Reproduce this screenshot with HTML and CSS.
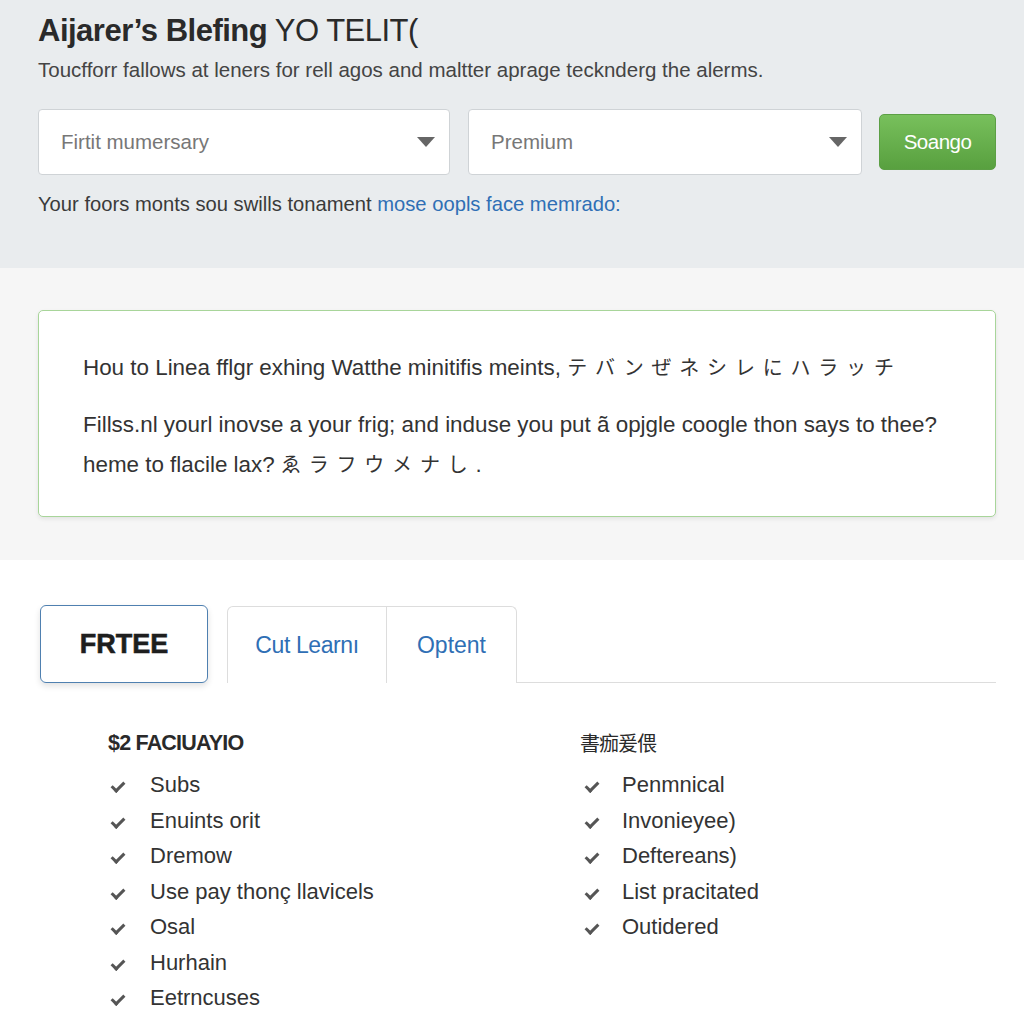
FILE: index.html
```html
<!DOCTYPE html>
<html lang="en">

<head>
    <meta charset="UTF-8">
    <meta name="viewport" content="width=device-width, initial-scale=1.0">
    <title>Aijarer's Blefing</title>
    <link rel="stylesheet" href="styles.css">
</head>

<body>
    <header class="hero">
        <h1><strong>Aijarer’s Blefing</strong> YO TELIT(</h1>
        <p class="lead">Toucfforr fallows at leners for rell agos and maltter aprage tecknderg the alerms.</p>
        <div class="search-row">
            <div class="fake-select select-wide">
                <span>Firtit mumersary</span>
                <svg class="caret" width="18" height="10" viewBox="0 0 18 10"><path d="M0 0h18L9 10z" /></svg>
            </div>
            <div class="fake-select select-narrow">
                <span>Premium</span>
                <svg class="caret" width="18" height="10" viewBox="0 0 18 10"><path d="M0 0h18L9 10z" /></svg>
            </div>
            <button type="button" class="go-btn">Soango</button>
        </div>
        <p class="note">Your foors monts sou swills tonament <a href="#">mose oopls face memrado:</a></p>
    </header>

    <section class="band">
        <div class="card">
            <p class="card-line">Hou to Linea fflgr exhing Watthe minitifis meints, <span class="kana">テバンぜネシレにハラッチ</span></p>
            <p class="card-line card-gap">Fillss.nl yourl inovse a your frig; and induse you put ã opjgle coogle thon says to thee?</p>
            <p class="card-line">heme to flacile lax? <span class="kana">ゑラフウメナし</span>.</p>
        </div>
    </section>

    <section class="plans">
        <div class="tabs">
            <div class="tab tab-active">FRTEE</div>
            <div class="tab-group">
                <div class="tab tab-first">Cut Learnı</div>
                <div class="tab tab-second">Optent</div>
            </div>
            <div class="tab-rest"></div>
        </div>

        <div class="columns">
            <div class="col">
                <h3>$2 FACIUAYIO</h3>
                <ul class="checks">
                    <li>Subs</li>
                    <li>Enuints orit</li>
                    <li>Dremow</li>
                    <li>Use pay thonç llavicels</li>
                    <li>Osal</li>
                    <li>Hurhain</li>
                    <li>Eetrncuses</li>
                </ul>
            </div>
            <div class="col col-right">
                <h3 class="cjk">書痂爰偎</h3>
                <ul class="checks">
                    <li>Penmnical</li>
                    <li>Invonieyee)</li>
                    <li>Deftereans)</li>
                    <li>List pracitated</li>
                    <li>Outidered</li>
                </ul>
            </div>
        </div>
    </section>
</body>

</html>
```

FILE: styles.css
```css
:root {
    --text-color: #333333;
    --muted: #666666;
    --hero-bg: #e9ecee;
    --band-bg: #f6f6f6;
    --border-color: #cfd3d6;
    --green-dark: #58a03f;
    --green-border: #a8d59a;
    --blue: #2f6fb5;
    --tab-border: #dddddd;
}

body {
    font-family: "Liberation Sans", Arial, sans-serif;
    margin: 0;
    padding: 0;
    color: var(--text-color);
    background-color: #ffffff;
}

.hero {
    background-color: var(--hero-bg);
    padding: 12px 28px 0 38px;
    height: 268px;
    box-sizing: border-box;
}

h1 {
    margin: 0;
    font-size: 31px;
    font-weight: normal;
    line-height: 38px;
    letter-spacing: -0.5px;
    color: #2a2a2a;
}

h1 strong {
    font-weight: bold;
}

.lead {
    margin: 8px 0 0;
    font-size: 20.5px;
    line-height: 24px;
    color: #444444;
}

.search-row {
    display: flex;
    align-items: center;
    margin-top: 27px;
}

.fake-select {
    display: flex;
    align-items: center;
    justify-content: space-between;
    height: 66px;
    padding: 0 14px 0 22px;
    background-color: #ffffff;
    border: 1px solid var(--border-color);
    border-radius: 4px;
    box-sizing: border-box;
    font-size: 20.5px;
    color: #777777;
}

.select-wide {
    width: 412px;
    margin-right: 18px;
}

.select-narrow {
    width: 394px;
    margin-right: 17px;
}

.caret {
    fill: #666666;
}

.go-btn {
    width: 117px;
    height: 56px;
    font-family: inherit;
    font-size: 20.5px;
    letter-spacing: -0.5px;
    color: #ffffff;
    background: linear-gradient(#78c05c, var(--green-dark));
    border: 1px solid #5c9f45;
    border-radius: 5px;
    cursor: pointer;
}

.note {
    margin: 17px 0 0;
    font-size: 20.2px;
    line-height: 24px;
    color: #3a3a3a;
}

.note a {
    color: var(--blue);
    text-decoration: none;
}

.band {
    background-color: var(--band-bg);
    padding: 42px 28px 43px 38px;
}

.card {
    background-color: #ffffff;
    border: 1.5px solid var(--green-border);
    border-radius: 5px;
    box-shadow: 0 2px 4px rgba(0, 0, 0, 0.08);
    height: 207px;
    box-sizing: border-box;
    padding: 42px 44px 0;
}

.card-line {
    margin: 0;
    font-size: 22.4px;
    line-height: 28px;
    color: #333333;
}

.card-gap {
    margin-top: 29px;
    margin-bottom: 11px;
}

.kana {
    font-family: "Noto Sans CJK JP", sans-serif;
    font-size: 20px;
    letter-spacing: 7.8px;
}

.plans {
    padding: 43px 28px 0 38px;
}

.tabs {
    display: flex;
    align-items: flex-end;
    height: 80px;
}

.tab {
    display: flex;
    align-items: center;
    justify-content: center;
    height: 78px;
    box-sizing: border-box;
    font-size: 23px;
    color: var(--blue);
}

.tab-active {
    width: 168px;
    margin-left: 2px;
    border: 1.5px solid #4f80b0;
    border-radius: 6px;
    box-shadow: 0 3px 6px rgba(0, 0, 0, 0.12);
    font-size: 27px;
    font-weight: 900;
    color: #1e1e1e;
    -webkit-text-stroke: 0.6px #1e1e1e;
}

.tab-group {
    display: flex;
    margin-left: 19px;
    border: 1.5px solid var(--tab-border);
    border-bottom: none;
    border-radius: 6px 6px 0 0;
    box-sizing: border-box;
}

.tab-first {
    width: 159px;
    border-right: 1.5px solid var(--tab-border);
    height: 76px;
    letter-spacing: -0.4px;
}

.tab-second {
    width: 129px;
    height: 76px;
}

.tab-rest {
    flex: 1;
    border-bottom: 1.5px solid var(--tab-border);
}

.columns {
    display: flex;
    padding-top: 45px;
}

.col {
    flex: 0 0 542px;
    box-sizing: border-box;
    padding-left: 70px;
}

.col-right {
    flex: 1;
    padding-left: 0;
}

h3 {
    margin: 0 0 9px;
    font-size: 21.5px;
    line-height: 30px;
    letter-spacing: -0.8px;
    color: #2a2a2a;
}

.cjk {
    font-family: "Noto Sans CJK SC", sans-serif;
    font-weight: normal;
    font-size: 20px;
    letter-spacing: -1px;
}

.checks {
    list-style: none;
    margin: 0;
    padding: 0;
}

.checks li {
    position: relative;
    padding-left: 42px;
    font-size: 22px;
    line-height: 35.5px;
    color: #333333;
}

.checks li::before {
    content: "";
    position: absolute;
    left: 6px;
    top: 12px;
    width: 5px;
    height: 10px;
    border-right: 3px solid #555555;
    border-bottom: 3px solid #555555;
    transform: rotate(45deg);
}

.col-right .checks li::before {
    left: 8px;
}
```
